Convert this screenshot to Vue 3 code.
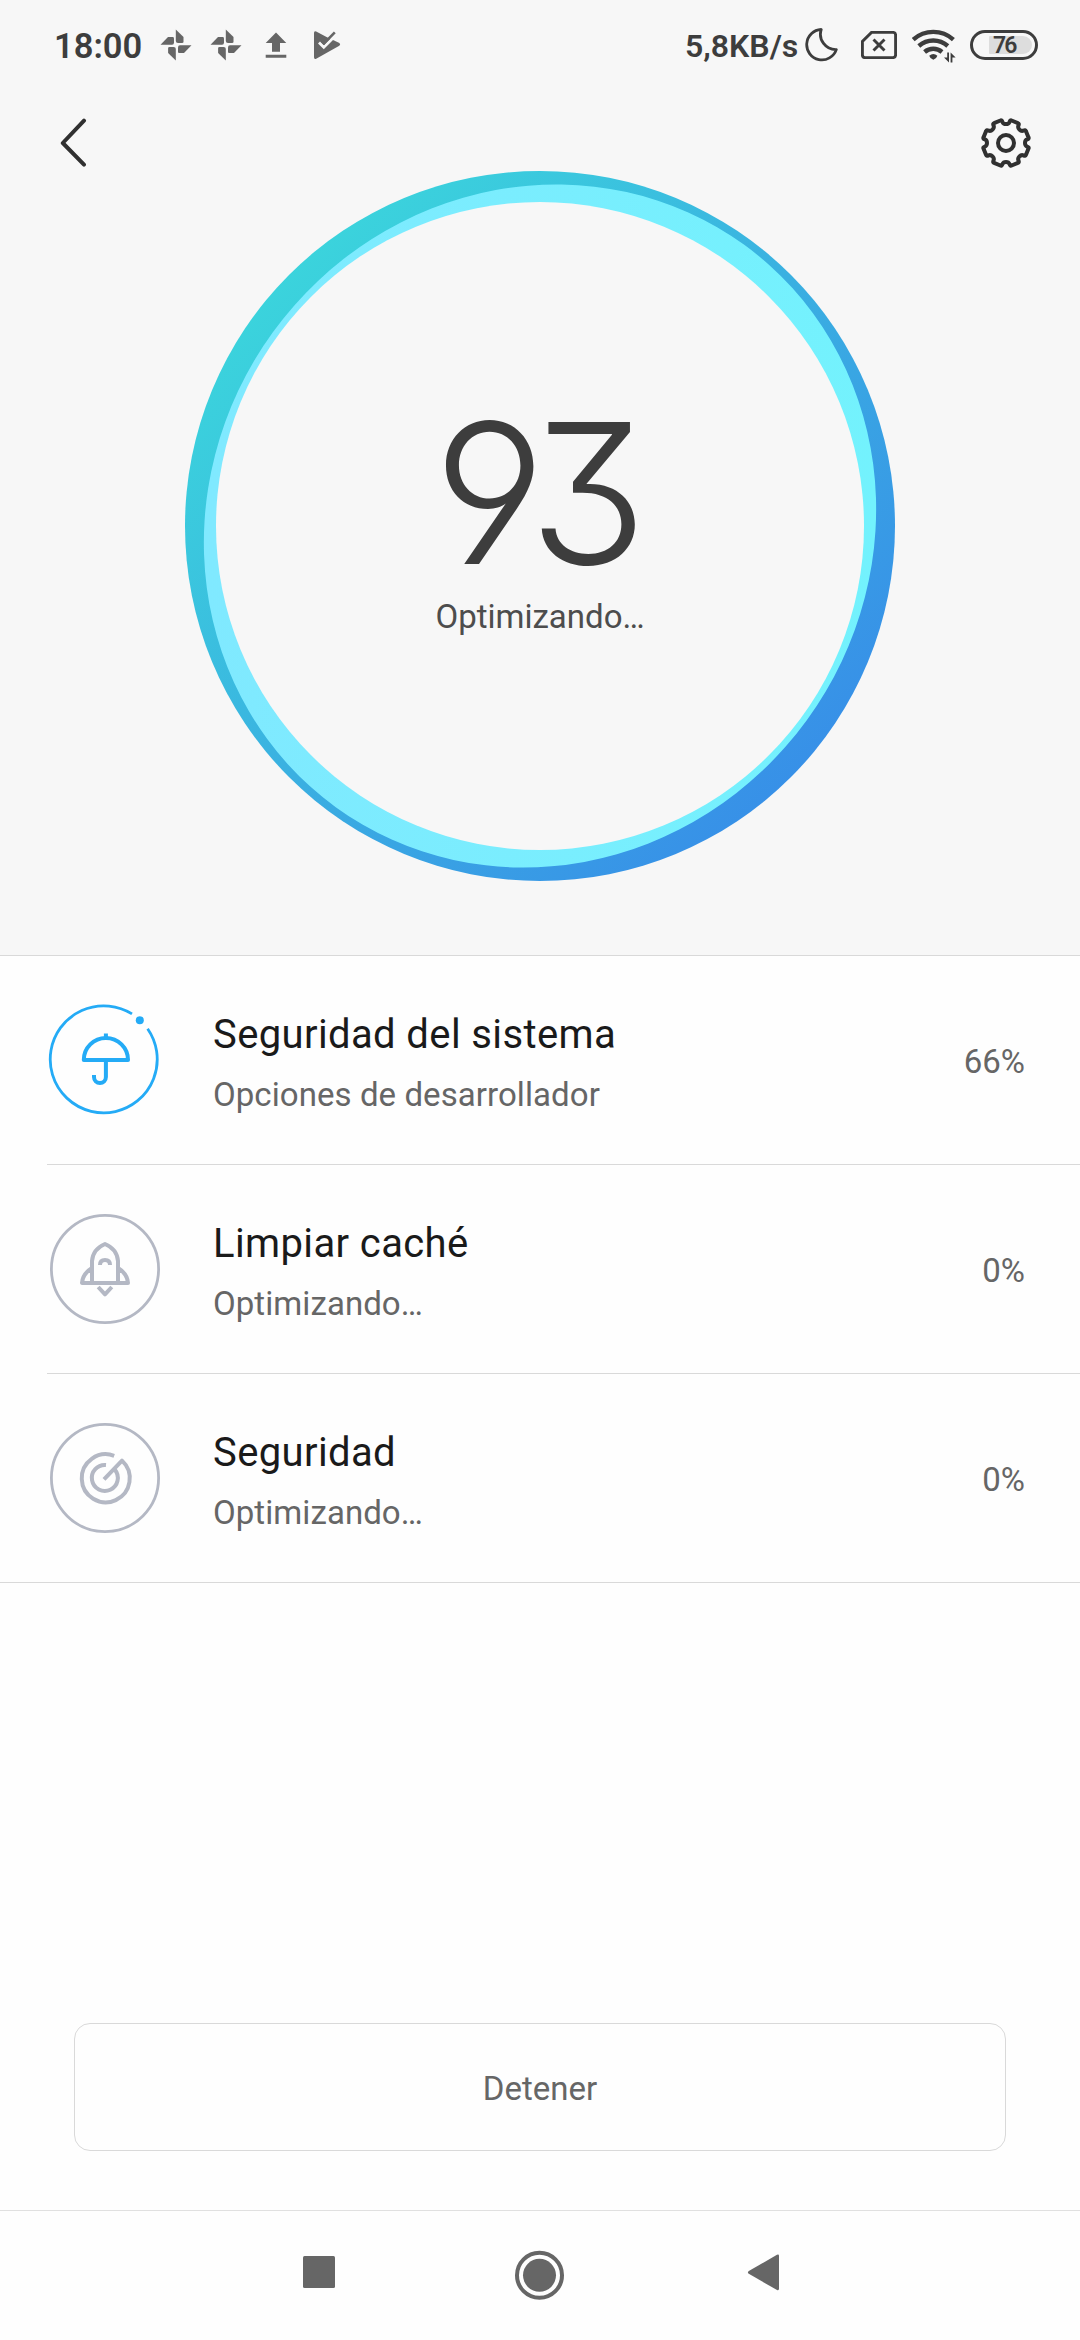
<script setup>
const tasks = [
  { icon: 'umbrella', title: 'Seguridad del sistema', status: 'Opciones de desarrollador', percent: '66%' },
  { icon: 'rocket', title: 'Limpiar caché', status: 'Optimizando…', percent: '0%' },
  { icon: 'radar', title: 'Seguridad', status: 'Optimizando…', percent: '0%' },
]

// Gear outline: eight wide teeth separated by narrow notches.
const polar = (deg, r) => {
  const a = (deg * Math.PI) / 180
  return `${(26 + r * Math.sin(a)).toFixed(2)} ${(26 - r * Math.cos(a)).toFixed(2)}`
}
const gearPath =
  'M' +
  Array.from({ length: 8 }, (_, k) => {
    const b = k * 45
    return [
      polar(b - 14, 23.2), 'Q', polar(b - 10.5, 23.6), polar(b - 9.5, 21.4),
      'Q', polar(b - 8, 19.2), polar(b, 19),
      'Q', polar(b + 8, 19.2), polar(b + 9.5, 21.4),
      'Q', polar(b + 10.5, 23.6), polar(b + 14, 23.2), 'L',
    ].join(' ')
  }).join(' ').slice(0, -1) + 'Z'
</script>

<template>
  <div class="screen">
    <section class="hero">
      <header class="status">
        <span class="clock">18:00</span>
        <svg v-for="n in 2" :key="n" class="pin" viewBox="0 0 32 32">
          <path d="M15.8 0.5 23.5 8V13Q23.5 14 22 14H18Q15.8 14 15.8 12Z" />
          <path d="M31.5 16.2 24 23.9H19Q18 23.9 18 22.4V18.4Q18 16.2 20 16.2Z" />
          <path d="M15.8 31.5 8.1 24V19Q8.1 18 9.6 18H13.6Q15.8 18 15.8 20Z" />
          <path d="M.5 15.8 8 8.1H13Q14 8.1 14 9.6V13.6Q14 15.8 12 15.8Z" />
        </svg>
        <svg class="upload" viewBox="0 0 22 26"><path d="M11 .5 21.3 11H15V19.8H7V11H.7ZM.7 22.8H21.3V25.8H.7Z" /></svg>
        <svg class="play" viewBox="0 0 28 30">
          <path d="M1 3Q1 .6 3.2 1.6L14.5 7.6 20.5 10.2 26.4 13Q28 14.5 26.3 15.7L3.2 28.7Q1 29.6 1 27.2Z" />
          <path d="M6 12.4 10.8 17.2 23.5 4.6" fill="none" stroke="#f7f7f7" stroke-width="2.8" />
          <path d="M8.8 11.2 11 13.4 21.8 2.4" fill="none" stroke="#666" stroke-width="2.6" />
        </svg>
        <span class="rate">5,8KB/s</span>
        <svg class="moon" viewBox="0 0 34 34"><path d="M17.2 1.5A15.2 15.2 0 1 0 32.3 21.6 15.4 15.4 0 0 1 17.2 1.5Z" /></svg>
        <svg class="sim" viewBox="0 0 36 28">
          <path d="M10.5 1.4H32Q34.6 1.4 34.6 4V24Q34.6 26.6 32 26.6H4Q1.4 26.6 1.4 24V10.5Z" />
          <path d="M12.5 8.5 23.5 19.5M23.5 8.5 12.5 19.5" />
        </svg>
        <svg class="wifi" viewBox="0 0 44 34">
          <g fill="none" stroke="#3d3d3d" stroke-width="4.4">
            <path d="M1.2 10.6A30 30 0 0 1 41.4 10.6" />
            <path d="M6.8 17A22 22 0 0 1 35.8 17" />
            <path d="M12.6 23A13.5 13.5 0 0 1 30 23" />
          </g>
          <path d="M17.2 26.8Q21.3 23 25.4 26.8Q25 29 21.3 30.8Q17.6 29 17.2 26.8Z" />
          <path d="M35.2 23.6H37V33.4L32 28.6H35.2ZM38.6 33.4V23.6L43.6 28.4H40.4V33.4Z" />
        </svg>
        <div class="battery"><span class="level">76</span></div>
      </header>

      <nav class="toolbar">
        <svg class="back" viewBox="0 0 28 50"><path d="M25 2.6 3.8 25 25 46.6" /></svg>
        <svg class="gear" viewBox="0 0 52 52">
          <path :d="gearPath" />
          <circle cx="26" cy="26" r="8" />
        </svg>
      </nav>

      <div class="gauge">
        <svg class="ring" viewBox="0 0 710 710">
          <defs>
            <linearGradient id="deep" x1=".12" y1=".12" x2=".88" y2=".88">
              <stop offset="0" stop-color="#3bd6dc" />
              <stop offset=".5" stop-color="#3ab0e1" />
              <stop offset="1" stop-color="#378ee8" />
            </linearGradient>
            <linearGradient id="glow" gradientUnits="userSpaceOnUse" x1="20" y1="300" x2="690" y2="300">
              <stop offset="0" stop-color="#80e9ff" />
              <stop offset="1" stop-color="#73f2fd" />
            </linearGradient>
            <mask id="lens">
              <g transform="rotate(-54 355 355)"><ellipse cx="355" cy="355" rx="347.5" ry="330" fill="#fff" /></g>
            </mask>
          </defs>
          <circle cx="355" cy="355" r="355" fill="url(#deep)" />
          <rect width="710" height="710" fill="url(#glow)" mask="url(#lens)" />
          <circle cx="355" cy="355" r="324" fill="#f7f7f7" />
        </svg>
        <div class="score">93</div>
        <div class="state">Optimizando…</div>
      </div>
    </section>

    <ul class="tasks">
      <li v-for="t in tasks" :key="t.title" class="task">
        <svg v-if="t.icon === 'umbrella'" class="icon active" viewBox="0 0 110 110">
          <path class="rim" d="M82 8.9A53.5 53.5 0 1 0 97.6 23.7" />
          <circle cx="89.8" cy="15.2" r="4" class="dot" />
          <path d="M33.8 55A22.1 22 0 0 1 78 55ZM55.9 28.5V33M55.9 55V72A5.95 6 0 0 1 44 72V70" />
        </svg>
        <svg v-else-if="t.icon === 'rocket'" class="icon" viewBox="0 0 110 110">
          <circle class="rim" cx="55" cy="55" r="53.6" />
          <path d="M42 69V47Q43 35 55 30Q67 35 68 47V69M42 54Q32.5 60 32 69H78Q77.5 60 68 54" />
          <path d="M50 51Q50 46 55 46Q60 46 60 51M48.2 73 55 80.4 61.8 73" />
        </svg>
        <svg v-else class="icon" viewBox="0 0 110 110">
          <circle class="rim" cx="55" cy="55" r="53.6" />
          <path d="M54 56.4 72 37.6A24 24 0 1 1 64.2 32.8M64.8 46.6A13 13 0 1 1 56 42" />
        </svg>
        <div class="copy">
          <div class="title">{{ t.title }}</div>
          <div class="sub">{{ t.status }}</div>
        </div>
        <span class="percent">{{ t.percent }}</span>
      </li>
    </ul>

    <footer class="actions"><button class="stop">Detener</button></footer>

    <nav class="keys">
      <svg viewBox="0 0 480 50">
        <rect x="3" y="6" width="32" height="32" rx="1.5" />
        <circle cx="239.5" cy="25.3" r="22.5" fill="none" stroke="#666" stroke-width="4" />
        <circle cx="239.5" cy="25.3" r="16.5" />
        <path d="M448.8 21 477 4.8Q479 4 479 6V38.5Q479 41 477 40L448.8 23.8Q447 22.4 448.8 21Z" />
      </svg>
    </nav>
  </div>
</template>

<style>
body { background: #fefefe; }
</style>

<style scoped>
.screen {
  width: 1080px;
  height: 2340px;
  display: flex;
  flex-direction: column;
  overflow: hidden;
  background: #fefefe;
  font-family: Roboto, "Liberation Sans", sans-serif;
  color: #666;
}
.hero {
  box-sizing: border-box;
  height: 956px;
  background: #f7f7f7;
  border-bottom: 1px solid #d9d9d9;
}
.status {
  display: flex;
  align-items: center;
  height: 90px;
  padding-left: 54px;
  color: #3d3d3d;
  fill: #3d3d3d;
}
.status svg { flex: none; }
.clock { width: 106px; font-size: 34.5px; font-weight: 600; line-height: 44px; margin-top: 2px; }
.pin { width: 32px; height: 32px; margin-right: 18px; fill: #666; }
.upload { width: 22px; height: 26px; margin-left: 5px; fill: #666; }
.play { width: 28px; height: 30px; margin-left: 26px; fill: #666; }
.rate { width: 120px; margin: 2px 0 0 344px; font-size: 32px; font-weight: 600; line-height: 44px; white-space: nowrap; }
.moon { width: 34px; height: 34px; margin-left: -1px; fill: none; stroke: #3d3d3d; stroke-width: 2.8; stroke-linejoin: round; }
.sim { width: 36px; height: 28px; margin-left: 23px; fill: none; stroke: #3d3d3d; stroke-width: 2.9; }
.wifi { width: 44px; height: 34px; margin-left: 15px; margin-top: 2px; }
.battery {
  box-sizing: border-box;
  width: 68px;
  height: 30px;
  margin-left: 14px;
  border: 3px solid #3d3d3d;
  border-radius: 15px;
  display: flex;
  align-items: center;
  padding-left: 16px;
}
.level {
  width: 43px;
  height: 18px;
  box-sizing: border-box;
  padding-left: 4px;
  border-radius: 1px 9px 9px 1px;
  background: #ddd;
  font-size: 23px;
  font-weight: 600;
  line-height: 19px;
  letter-spacing: -2px;
}
.toolbar {
  display: flex;
  align-items: center;
  justify-content: space-between;
  height: 106px;
  padding: 0 48px 0 59px;
  fill: none;
  stroke: #303030;
  stroke-width: 4;
  stroke-linecap: round;
  stroke-linejoin: round;
}
.back { width: 28px; height: 50px; }
.gear { width: 52px; height: 52px; }
.gauge {
  position: relative;
  width: 710px;
  height: 710px;
  margin: -25px auto 0;
  display: flex;
  flex-direction: column;
  align-items: center;
}
.ring { position: absolute; inset: 0; width: 710px; height: 710px; }
.score {
  position: relative;
  margin-top: 223px;
  height: 198px;
  padding-right: 16px;
  font-family: Inter, Lato, sans-serif;
  font-feature-settings: "cv04", "cv09";
  font-size: 195px;
  font-weight: 300;
  line-height: 198px;
  letter-spacing: -17px;
  color: #3d3d3d;
}
.state { position: relative; margin-top: 4px; font-size: 33px; line-height: 42px; color: #4d4d4d; }
.tasks { list-style: none; margin: 0; padding: 0; }
.task {
  display: flex;
  align-items: center;
  height: 208px;
  margin-left: 47px;
  padding: 0 55px 0 3px;
  border-bottom: 1px solid #d9d9d9;
}
.task:last-child { margin-left: 0; padding-left: 50px; }
.icon {
  flex: none;
  width: 110px;
  height: 110px;
  overflow: visible;
  fill: none;
  stroke: #b4b8c4;
  stroke-width: 4;
  stroke-linejoin: round;
}
.icon.active { stroke: #24abf6; }
.rim { stroke-width: 2.8; }
.icon .dot { fill: #24abf6; stroke: none; }
.copy { flex: 1; margin-left: 53px; padding-top: 6px; }
.title { font-size: 40px; line-height: 52px; color: #1a1a1a; letter-spacing: 0.38px; }
.sub { margin-top: 12px; font-size: 33px; line-height: 44px; letter-spacing: 0.07px; }
.percent { font-size: 33px; line-height: 44px; margin-top: 3px; }
.actions { margin-top: 440px; padding: 0 74px; display: flex; }
.stop {
  flex: 1;
  box-sizing: border-box;
  height: 128px;
  padding: 4px 0 0;
  border: 1px solid #d9d9d9;
  border-radius: 16px;
  background: none;
  font: 33px/42px Roboto, "Liberation Sans", sans-serif;
  color: #666;
}
.keys {
  margin-top: 59px;
  height: 129px;
  border-top: 1px solid #e0e0e0;
  display: flex;
  justify-content: center;
}
.keys svg { width: 480px; height: 50px; margin-top: 39px; fill: #666; }
</style>
